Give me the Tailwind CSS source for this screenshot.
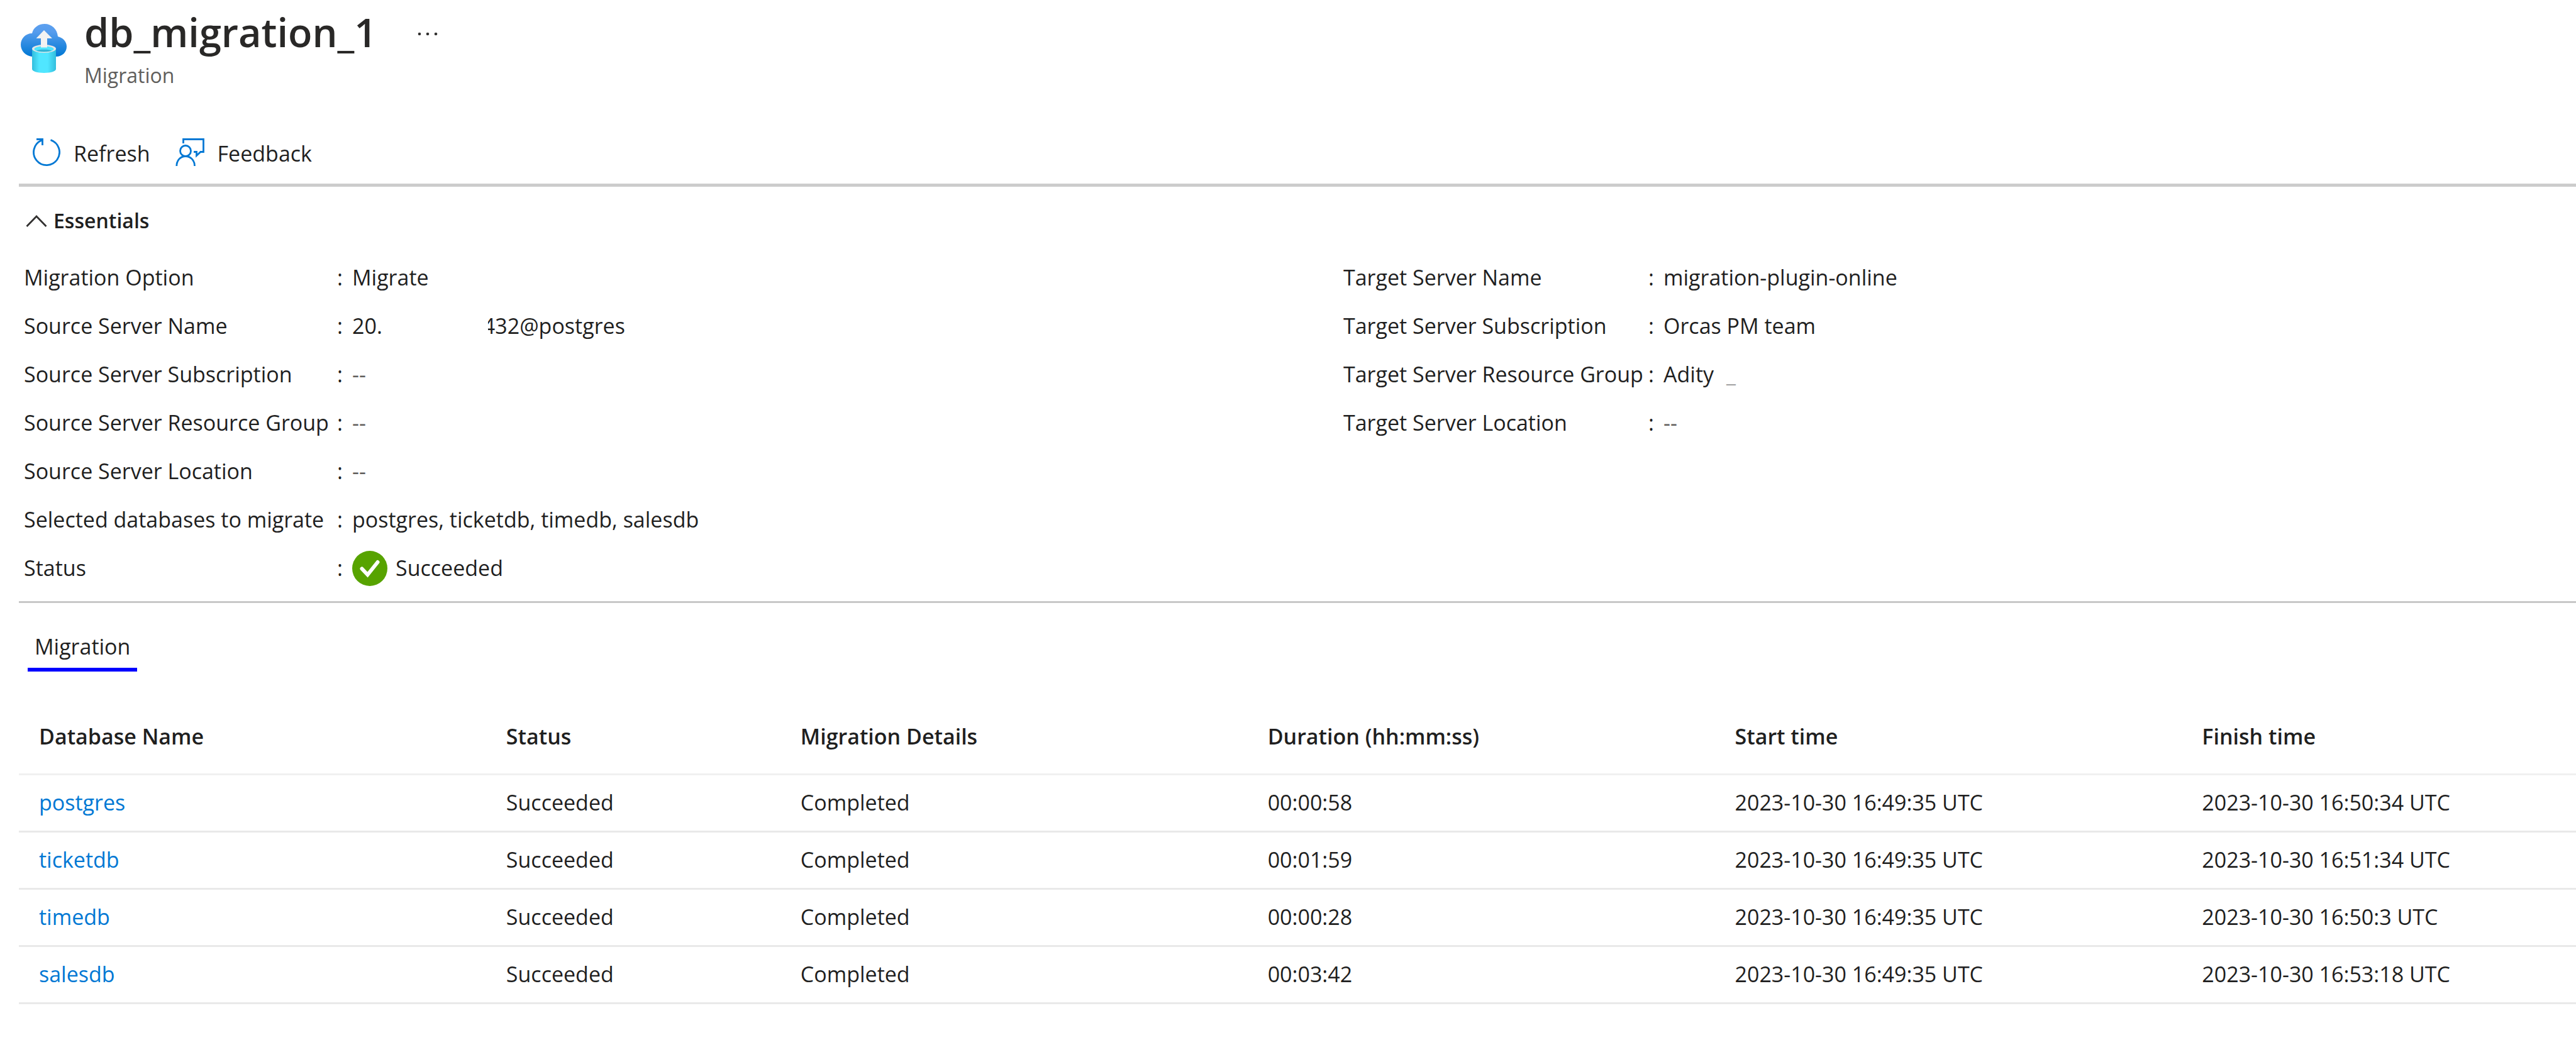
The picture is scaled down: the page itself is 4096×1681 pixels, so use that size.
<!DOCTYPE html>
<html lang="en">
<head>
<meta charset="utf-8">
<title>db_migration_1 - Migration</title>
<script src="https://cdn.jsdelivr.net/npm/@tailwindcss/browser@4"></script>
</head>
<body class="bg-white text-[#1f1f1f] font-['Open_Sans','Noto_Sans',sans-serif] text-[34px] leading-[48px]">
<main class="pl-[30px]">
  <header class="flex pt-[11px]">
    <svg class="mt-[26px] ml-[3px] h-[80px] w-[74px] shrink-0" viewBox="0 0 74 80" aria-hidden="true">
      <defs>
        <linearGradient id="cloud" x1="0" y1="0" x2="0" y2="1"><stop offset="0" stop-color="#5ea0ef"/><stop offset=".25" stop-color="#559ced"/><stop offset="1" stop-color="#0078d4"/></linearGradient>
        <linearGradient id="tube" x1="0" y1="0" x2="1" y2="0"><stop offset="0" stop-color="#32bedd"/><stop offset=".3" stop-color="#50e6ff"/><stop offset=".65" stop-color="#50e6ff"/><stop offset="1" stop-color="#32bedd"/></linearGradient>
      </defs>
      <path fill="url(#cloud)" d="M18 16C20 7 28 1 38 1C49 1 58 9 59 21C67 23 73 29 73 37C73 46 66 53 56 53H18C8 52 0 44 0 34C0 24 8 16 18 16Z"/>
      <path fill="url(#tube)" d="M18 40H56V73C56 76 48 79 37 79C26 79 18 76 18 73Z"/>
      <ellipse cx="37" cy="40.500" rx="19" ry="6.500" fill="#e6e6e6"/>
      <ellipse cx="37" cy="41" rx="15.500" ry="4.500" fill="#50e6ff"/>
      <path fill="#198ab3" fill-opacity=".55" d="M25 43.500C28 41 46 41 49 43.500C46 46 28 46 25 43.500Z"/>
      <path fill="#f2f2f2" d="M37 11L50 24H42V38.500H32V24H24.500Z"/>
    </svg>
    <div class="ml-[27px]">
      <div class="flex items-center">
        <h1 class="text-[63px] leading-[80px] font-semibold text-[#292827]">db_migration_1</h1>
        <button type="button" aria-label="More" class="ml-[64px] h-[36px] w-[36px]">
          <svg class="h-[36px] w-[36px]" viewBox="0 0 36 36" fill="#323130"><circle cx="4" cy="21" r="2.300"/><circle cx="17" cy="21" r="2.300"/><circle cx="30" cy="21" r="2.300"/></svg>
        </button>
      </div>
      <p class="mt-[9px] text-[32px] leading-[40px] text-[#605e5c]">Migration</p>
    </div>
  </header>

  <div role="toolbar" class="mt-20 flex border-b-[5px] border-[#cccccc] pb-6">
    <button type="button" class="ml-[22px] flex gap-[21px]">
      <svg class="h-[44px] w-[44px]" viewBox="0 0 44 44" fill="none" stroke="#0078d4" stroke-width="2.800"><path d="M28.500 2.600A20.500 20.500 0 1 1 14 3.200M6 1.500H15.500V11"/></svg>
      <span>Refresh</span>
    </button>
    <button type="button" class="ml-[40px] flex gap-[21px]">
      <svg class="h-[44px] w-[46px]" viewBox="0 0 46 44" fill="none" stroke="#0078d4" stroke-width="2.800"><circle cx="16" cy="20" r="8.500"/><path d="M1.800 44C1.800 35 8 28.500 16 28.500S30.500 35 30.500 44M12.500 8V1.500H44.500V21.500H40L33.500 27.500V21.500H29"/></svg>
      <span>Feedback</span>
    </button>
  </div>

  <section class="border-b-[3px] border-[#c8c8c8] pt-[30px] pb-[14px]">
    <button type="button" aria-expanded="true" class="ml-[11px] flex items-center gap-[10px] text-[32px] font-semibold">
      <svg class="h-[20px] w-[34px]" viewBox="0 0 34 20" fill="none" stroke="#323130" stroke-width="2.800"><path d="M1.500 19L17 3L32.500 19"/></svg>
      Essentials
    </button>
    <div class="mt-7 grid grid-cols-[2098fr_1960fr] pl-2 leading-[77px]">
      <dl class="grid grid-cols-[498px_1fr] content-start">
        <dt>Migration Option</dt><dd class="flex"><span class="w-[24px]">:</span>Migrate</dd>
        <dt>Source Server Name</dt><dd class="flex"><span class="w-[24px]">:</span>20.<span class="ml-[168px] overflow-hidden"><span class="-ml-[8px]">432@postgres</span></span></dd>
        <dt>Source Server Subscription</dt><dd class="flex"><span class="w-[24px]">:</span><span class="text-[#605e5c]">--</span></dd>
        <dt>Source Server Resource Group</dt><dd class="flex"><span class="w-[24px]">:</span><span class="text-[#605e5c]">--</span></dd>
        <dt>Source Server Location</dt><dd class="flex"><span class="w-[24px]">:</span><span class="text-[#605e5c]">--</span></dd>
        <dt>Selected databases to migrate</dt><dd class="flex"><span class="w-[24px]">:</span>postgres, ticketdb, timedb, salesdb</dd>
        <dt>Status</dt><dd class="flex items-center"><span class="w-[24px]">:</span>
          <svg class="mr-[13px] h-[56px] w-[56px]" viewBox="0 0 56 56" aria-hidden="true"><circle cx="28" cy="28" r="28" fill="#57a300"/><path d="M15.500 28.500L24.500 38L40.500 18" fill="none" stroke="#fff" stroke-width="6" stroke-linecap="round"/></svg>Succeeded</dd>
      </dl>
      <dl class="grid grid-cols-[485px_1fr] content-start">
        <dt>Target Server Name</dt><dd class="flex"><span class="w-[24px]">:</span>migration-plugin-online</dd>
        <dt>Target Server Subscription</dt><dd class="flex"><span class="w-[24px]">:</span>Orcas PM team</dd>
        <dt>Target Server Resource Group</dt><dd class="flex"><span class="w-[24px]">:</span>Adity<span class="ml-5 text-[#a0a0a0]">_</span></dd>
        <dt>Target Server Location</dt><dd class="flex"><span class="w-[24px]">:</span><span class="text-[#605e5c]">--</span></dd>
      </dl>
    </div>
  </section>

  <div role="tablist" class="mt-[45px] ml-[14px] flex">
    <button type="button" role="tab" aria-selected="true" class="border-b-[6px] border-[#0000ff] px-[11px] pb-[10px]">Migration</button>
  </div>

  <table class="mt-[57px] w-full table-fixed border-separate border-spacing-0 text-left [&_th]:border-b-[3px] [&_th]:border-[#f0f0f0] [&_th]:pt-[22px] [&_th]:pb-[35px] [&_th]:pl-[32px] [&_th]:font-semibold [&_td]:border-b-[3px] [&_td]:border-[#e9e9e9] [&_td]:pt-[19px] [&_td]:pb-[21px] [&_td]:pl-[32px]">
    <colgroup><col class="w-[18.27%]"><col class="w-[11.51%]"><col class="w-[18.27%]"><col class="w-[18.27%]"><col class="w-[18.27%]"><col></colgroup>
    <thead>
      <tr><th>Database Name</th><th>Status</th><th>Migration Details</th><th>Duration (hh:mm:ss)</th><th>Start time</th><th>Finish time</th></tr>
    </thead>
    <tbody>
      <tr><td><a href="#" class="text-[#0078d4]">postgres</a></td><td>Succeeded</td><td>Completed</td><td>00:00:58</td><td>2023-10-30 16:49:35 UTC</td><td>2023-10-30 16:50:34 UTC</td></tr>
      <tr><td><a href="#" class="text-[#0078d4]">ticketdb</a></td><td>Succeeded</td><td>Completed</td><td>00:01:59</td><td>2023-10-30 16:49:35 UTC</td><td>2023-10-30 16:51:34 UTC</td></tr>
      <tr><td><a href="#" class="text-[#0078d4]">timedb</a></td><td>Succeeded</td><td>Completed</td><td>00:00:28</td><td>2023-10-30 16:49:35 UTC</td><td>2023-10-30 16:50:3 UTC</td></tr>
      <tr><td><a href="#" class="text-[#0078d4]">salesdb</a></td><td>Succeeded</td><td>Completed</td><td>00:03:42</td><td>2023-10-30 16:49:35 UTC</td><td>2023-10-30 16:53:18 UTC</td></tr>
    </tbody>
  </table>
</main>
</body>
</html>
